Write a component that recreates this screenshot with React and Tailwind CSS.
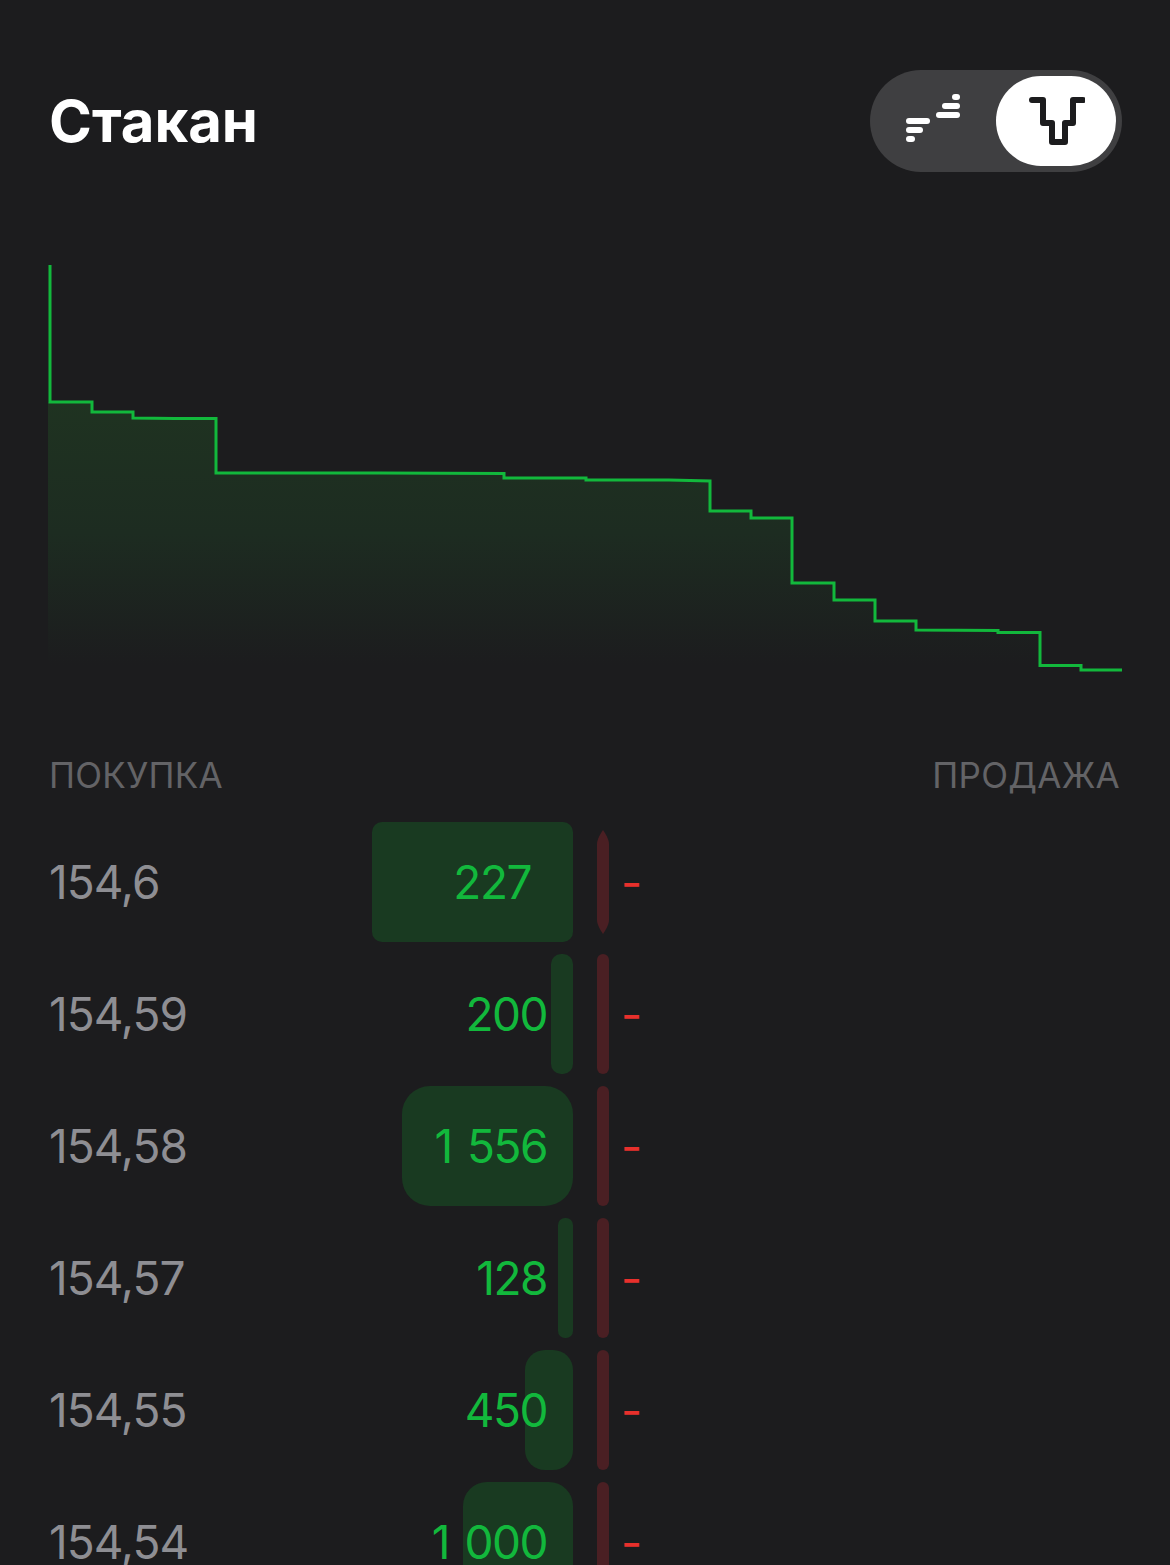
const rows = [
  { price: "154,6", qty: "227", bar: "w-[201px] rounded-[10px]", pad: "pr-[42px]" },
  { price: "154,59", qty: "200", bar: "w-[22px] rounded-[10px]", pad: "pr-[26px]" },
  { price: "154,58", qty: "1 556", bar: "w-[171px] rounded-[28px]", pad: "pr-[26px]" },
  { price: "154,57", qty: "128", bar: "w-[15px] rounded-[7px]", pad: "pr-[26px]" },
  { price: "154,55", qty: "450", bar: "w-[48px] rounded-[20px]", pad: "pr-[26px]" },
  { price: "154,54", qty: "1 000", bar: "w-[110px] rounded-[24px]", pad: "pr-[26px]" },
];

const line =
  "M50 265V402H92V412H133V418L175 418.5H216V473H380L504 473.5V478H586V480H669L710 481V511H751V518H792V583H834V600H875V621H916V630L998 630.5V632.5H1040V665.5H1081V670H1122";

function DepthChart() {
  return (
    <svg width="1170" height="420" viewBox="0 260 1170 420" className="block">
      <defs>
        <linearGradient id="depthFill" x1="0" y1="400" x2="0" y2="665" gradientUnits="userSpaceOnUse">
          <stop offset="0" stopColor="#1f3321" />
          <stop offset="0.5" stopColor="#1d2c21" />
          <stop offset="1" stopColor="#1c1c1e" />
        </linearGradient>
      </defs>
      <path d={`M48 402${line.slice(line.indexOf("H"))}V670H48Z`} fill="url(#depthFill)" />
      <path d={line} fill="none" stroke="#12b83c" strokeWidth="3" />
    </svg>
  );
}

function Toggle() {
  return (
    <div className="flex h-[102px] w-[252px] items-center justify-between rounded-full bg-[#3f3f41] pl-[36px] pr-[6px]">
      <svg width="54" height="48" viewBox="906 94 54 48" fill="#ffffff" className="-translate-y-[3px]">
        <rect x="952" y="94" width="8" height="6" rx="3" />
        <rect x="942" y="103" width="18" height="6" rx="3" />
        <rect x="936" y="112" width="24" height="6" rx="3" />
        <rect x="906" y="118" width="24" height="6" rx="3" />
        <rect x="906" y="127" width="17" height="6" rx="3" />
        <rect x="906" y="136" width="9" height="6" rx="3" />
      </svg>
      <div className="flex h-[90px] w-[120px] items-center justify-center rounded-full bg-white">
        <svg width="58" height="50" viewBox="1027 96 58 50" fill="none">
          <path
            d="M1032 100H1043V123H1052V142H1065V123H1073V100H1083"
            stroke="#1c1c1e"
            strokeWidth="6"
            strokeLinecap="round"
            strokeLinejoin="round"
          />
        </svg>
      </div>
    </div>
  );
}

function Row({ item, first }) {
  return (
    <div className="flex h-[120px] shrink-0 items-center">
      <div className="relative flex h-full w-[573px] items-center justify-between pl-[49px]">
        <div className={`absolute bottom-0 right-0 top-0 bg-[#193a21] ${item.bar}`} />
        <span className="relative text-[46px] leading-none tracking-[-1px] text-[#8e8e93]">{item.price}</span>
        <span className={`relative text-[46px] leading-none tracking-[-1.5px] [word-spacing:4px] text-[#12b83c] ${item.pad}`}>{item.qty}</span>
      </div>
      {first ? (
        <svg width="12" height="104" viewBox="0 0 12 104" className="ml-6 block">
          <path d="M6 0C8 3 12 9 12 14V90C12 95 8 101 6 104C4 101 0 95 0 90V14C0 9 4 3 6 0Z" fill="#4a1f23" />
        </svg>
      ) : (
        <div className="ml-6 h-full w-3 rounded-md bg-[#4a1f23]" />
      )}
      <span className="ml-3 text-[46px] leading-none text-[#e8302c]">-</span>
    </div>
  );
}

export default function App() {
  return (
    <div className="flex h-[1565px] w-[1170px] flex-col overflow-hidden bg-[#1c1c1e] font-['Inter','Noto_Sans',sans-serif]">
      <div className="flex items-center justify-between pl-[49px] pr-[48px] pt-[70px]">
        <h1 className="text-[58px] font-bold leading-none text-white">Стакан</h1>
        <Toggle />
      </div>
      <div className="mt-[88px]">
        <DepthChart />
      </div>
      <div className="mt-[78px] flex justify-between pl-[49px] pr-[50px] text-[35px] leading-none tracking-[0.3px] text-[#636366]">
        <span>ПОКУПКА</span>
        <span>ПРОДАЖА</span>
      </div>
      <div className="mt-[29px] flex flex-col gap-3">
        {rows.map((item, i) => (
          <Row key={item.price} item={item} first={i === 0} />
        ))}
      </div>
    </div>
  );
}
